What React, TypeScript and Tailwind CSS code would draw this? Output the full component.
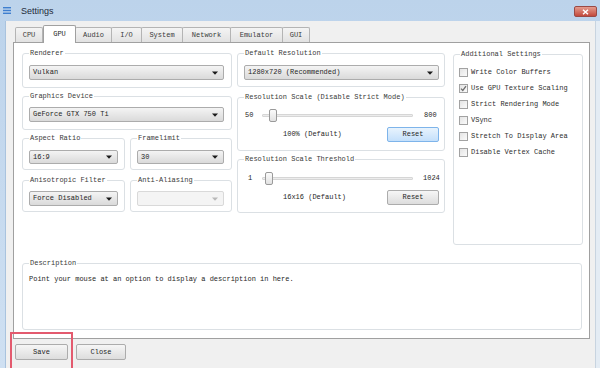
import React from "react";

const MONO = "font-['Liberation_Mono','DejaVu_Sans_Mono',monospace]";

function Group({
  label,
  className = "",
  children,
}: {
  label: string;
  className?: string;
  children?: React.ReactNode;
}) {
  return (
    <div className={`relative border border-[#dbe0e4] rounded-[3px] ${className}`}>
      <span className="absolute -top-[5px] left-[6px] bg-white px-[1px] leading-[9px] text-[#3a3a3a]">
        {label}
      </span>
      {children}
    </div>
  );
}

function Arrow({ color = "#1a1a1a" }: { color?: string }) {
  return (
    <svg width="6" height="4" viewBox="0 0 6 4">
      <path d="M0 0.5H6L3 3.8Z" fill={color} />
    </svg>
  );
}

function Combo({
  value,
  className = "",
  disabled = false,
  h = "h-[15px]",
}: {
  value?: string;
  className?: string;
  disabled?: boolean;
  h?: string;
}) {
  return (
    <div
      className={`flex items-center justify-between ${h} pl-[3px] pr-[5px] border rounded-[2px] ${
        disabled
          ? "border-[#d9d9d9] bg-[#f4f4f4]"
          : "border-[#acacac] bg-linear-to-b from-[#f4f4f4] to-[#dadada]"
      } ${className}`}
    >
      <span className="leading-[9px] text-[#262626] whitespace-nowrap">{value}</span>
      <Arrow color={disabled ? "#b8b8b8" : "#1a1a1a"} />
    </div>
  );
}

function Button({
  label,
  className = "",
  active = false,
}: {
  label: string;
  className?: string;
  active?: boolean;
}) {
  return (
    <div
      className={`flex items-center justify-center rounded-[2px] border ${
        active
          ? "border-[#7eb4ea] bg-linear-to-b from-[#e8f3fd] to-[#c4e0fb]"
          : "border-[#acacac] bg-linear-to-b from-[#f6f6f6] to-[#dddddd]"
      } ${className}`}
    >
      <span className="leading-[9px] text-[#262626]">{label}</span>
    </div>
  );
}

function Slider({
  min,
  max,
  minW,
  handleLeft,
  maxMl,
}: {
  min: string;
  max: string;
  minW: string;
  handleLeft: string;
  maxMl: string;
}) {
  return (
    <div className="flex items-center h-[14px]">
      <span className={`${minW} leading-[9px] text-[#262626]`}>{min}</span>
      <div className="relative w-[151px] h-[3px] border border-[#d6d6d6] bg-[#ececec] rounded-[1px]">
        <div
          className={`absolute top-[-6px] ${handleLeft} w-[8px] h-[13px] rounded-[2px] border border-[#9a9a9a] bg-linear-to-b from-[#fbfbfb] to-[#e2e2e2]`}
        />
      </div>
      <span className={`${maxMl} leading-[9px] text-[#262626]`}>{max}</span>
    </div>
  );
}

function Check({ label, checked = false }: { label: string; checked?: boolean }) {
  return (
    <div className="flex items-center h-[16px]">
      <div className="w-[9px] h-[9px] border border-[#a2a2a2] bg-linear-to-br from-[#e4e4e4] to-[#fbfbfb] flex items-center justify-center">
        {checked && (
          <svg width="7" height="7" viewBox="0 0 7 7">
            <path d="M1 3.6L2.8 5.4L6 1.2" stroke="#6d6d6d" strokeWidth="1.3" fill="none" />
          </svg>
        )}
      </div>
      <span className="ml-[3px] leading-[9px] text-[#2e2e2e] whitespace-nowrap">{label}</span>
    </div>
  );
}

const tabs = [
  { name: "CPU", w: "w-[28px]" },
  { name: "GPU", w: "w-[33px]", active: true },
  { name: "Audio", w: "w-[37px]" },
  { name: "I/O", w: "w-[31px]" },
  { name: "System", w: "w-[42px]" },
  { name: "Network", w: "w-[49px]" },
  { name: "Emulator", w: "w-[53px]" },
  { name: "GUI", w: "w-[28px]" },
];

export default function App() {
  return (
    <div
      className={`relative w-[600px] h-[368px] overflow-hidden bg-linear-to-b from-[#bcd3eb] to-[#cfe0f2] ${MONO} text-[7px]`}
    >
      {/* Title bar */}
      <div className="flex items-center justify-between h-[21px] pl-[3px] pr-[3px]">
        <div className="flex items-center">
          <svg width="8" height="7" viewBox="0 0 8 7">
            <rect x="0" y="0" width="8" height="1.4" fill="#3f7fcf" />
            <rect x="0" y="2.8" width="8" height="1.4" fill="#3f7fcf" />
            <rect x="0" y="5.6" width="8" height="1.4" fill="#3f7fcf" />
          </svg>
          <span className="ml-[10px] font-['Liberation_Sans',Arial,sans-serif] text-[9px] leading-[10px] text-[#1e2b3a]">
            Settings
          </span>
        </div>
        <div className="flex items-center justify-center w-[23px] h-[11px] mt-[2px] rounded-[2px] border border-[#9a4a45] bg-linear-to-b from-[#e49b8e] to-[#c2493c]">
          <svg width="7" height="6" viewBox="0 0 7 6">
            <path d="M1 0.8L6 5.2M6 0.8L1 5.2" stroke="#ffffff" strokeWidth="1.5" />
          </svg>
        </div>
      </div>

      {/* Body */}
      <div className="ml-[5px] w-[590px] h-[347px] bg-[#f0f0f0] border-l border-[#a9c3de]">
        {/* Tabs */}
        <div className="flex items-end h-[21px] ml-[9px]">
          {tabs.map((t) =>
            t.active ? (
              <div
                key={t.name}
                className={`${t.w} h-[18px] relative z-10 -mb-px bg-white border border-b-0 border-[#a0a0a0] rounded-t-[2px] flex items-center justify-center`}
              >
                <span className="leading-[9px] text-[#262626]">{t.name}</span>
              </div>
            ) : (
              <div
                key={t.name}
                className={`${t.w} h-[15px] bg-linear-to-b from-[#f4f4f4] to-[#e2e2e2] border border-b-0 border-[#b4b4b4] -ml-px first:ml-0 rounded-t-[2px] flex items-center justify-center`}
              >
                <span className="leading-[9px] text-[#3a3a3a]">{t.name}</span>
              </div>
            )
          )}
        </div>

        {/* Pane */}
        <div className="ml-[7px] w-[577px] h-[297px] bg-white border border-[#a0a0a0] pt-[10px] pl-[8px]">
          <div className="flex h-[192px]">
            {/* Column 1 */}
            <div className="w-[210px] flex flex-col">
              <Group label="Renderer" className="h-[35px] pt-[11px] pl-[6px] pr-[7px]">
                <Combo value="Vulkan" />
              </Group>
              <Group label="Graphics Device" className="mt-[8px] h-[34px] pt-[10px] pl-[6px] pr-[7px]">
                <Combo value="GeForce GTX 750 Ti" />
              </Group>
              <div className="flex mt-[8px] gap-[5px]">
                <Group label="Aspect Ratio" className="w-[103px] h-[32px] pt-[11px] pl-[6px] pr-[6px]">
                  <Combo value="16:9" h="h-[14px]" />
                </Group>
                <Group label="Framelimit" className="w-[102px] h-[32px] pt-[11px] pl-[6px] pr-[7px]">
                  <Combo value="30" h="h-[14px]" />
                </Group>
              </div>
              <div className="flex mt-[10px] gap-[5px]">
                <Group label="Anisotropic Filter" className="w-[103px] h-[32px] pt-[10px] pl-[6px] pr-[6px]">
                  <Combo value="Force Disabled" />
                </Group>
                <Group label="Anti-Aliasing" className="w-[102px] h-[32px] pt-[10px] pl-[6px] pr-[7px]">
                  <Combo disabled />
                </Group>
              </div>
            </div>

            {/* Column 2 */}
            <div className="w-[208px] ml-[5px] flex flex-col">
              <Group label="Default Resolution" className="h-[34px] pt-[11px] pl-[6px] pr-[5px]">
                <Combo value="1280x720 (Recommended)" />
              </Group>
              <Group label="Resolution Scale (Disable Strict Mode)" className="mt-[10px] h-[54px] pt-[10px] pl-[7px]">
                <Slider min="50" max="800" minW="w-[17px]" handleLeft="left-[6px]" maxMl="ml-[11px]" />
                <div className="flex items-center mt-[5px] pl-[38px]">
                  <span className="w-[104px] leading-[9px] text-[#262626]">100% (Default)</span>
                  <Button label="Reset" active className="w-[52px] h-[15px]" />
                </div>
              </Group>
              <Group label="Resolution Scale Threshold" className="mt-[8px] h-[54px] pt-[11px] pl-[10px]">
                <Slider min="1" max="1024" minW="w-[14px]" handleLeft="left-[2px]" maxMl="ml-[10px]" />
                <div className="flex items-center mt-[5px] pl-[35px]">
                  <span className="w-[104px] leading-[9px] text-[#262626]">16x16 (Default)</span>
                  <Button label="Reset" className="w-[52px] h-[15px]" />
                </div>
              </Group>
            </div>

            {/* Column 3 */}
            <div className="w-[130px] ml-[8px] pt-[1px]">
              <Group label="Additional Settings" className="h-[191px] pt-[9px] pl-[5px]">
                <Check label="Write Color Buffers" />
                <Check label="Use GPU Texture Scaling" checked />
                <Check label="Strict Rendering Mode" />
                <Check label="VSync" />
                <Check label="Stretch To Display Area" />
                <Check label="Disable Vertex Cache" />
              </Group>
            </div>
          </div>

          {/* Description */}
          <Group label="Description" className="mt-[18px] w-[560px] h-[67px] pt-[10px] pl-[6px]">
            <span className="leading-[9px] text-[#262626]">
              Point your mouse at an option to display a description in here.
            </span>
          </Group>
        </div>

        {/* Bottom buttons */}
        <div className="flex items-center mt-[5px] ml-[9px] gap-[8px]">
          <Button label="Save" className="w-[53px] h-[16px]" />
          <Button label="Close" className="w-[50px] h-[16px]" />
        </div>
      </div>

      {/* Right frame edge */}
      <div className="absolute top-[21px] right-0 w-[5px] h-[347px] bg-[#e4ecf4] border-l border-[#c8d4e0]" />

      {/* Red annotation box */}
      <div className="absolute left-[10px] top-[332px] w-[63px] h-[40px] border-2 border-[#e35a6e]" />
    </div>
  );
}
